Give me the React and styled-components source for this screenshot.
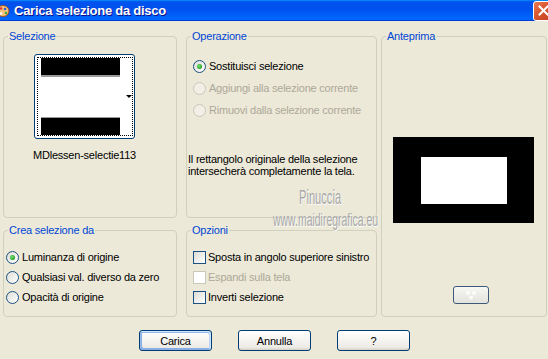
import React from 'react';
import styled, { createGlobalStyle, css } from 'styled-components';

const Global = createGlobalStyle`
  html, body { margin: 0; padding: 0; background: #ECE9D8; }
  body {
    font-family: "Liberation Sans", Tahoma, Arial, sans-serif;
    font-size: 11px;
    letter-spacing: -0.22px;
    color: #000;
  }
`;

const Window = styled.div`
  position: relative;
  width: 548px;
  height: 359px;
  overflow: hidden;
  background: #ECE9D8;
`;

const TitleBar = styled.div`
  height: 21px;
  display: flex;
  align-items: center;
  overflow: hidden;
  background: linear-gradient(180deg, #0997ff, #0053ee 8%, #0050ee 40%, #06f 88%, #06f 93%, #005bff 95%, #003dd7 96%, #003dd7);
`;

const AppIcon = styled.svg`
  flex: none;
  margin-left: -4px;
`;

const Title = styled.span`
  margin-left: 4px;
  flex: 1;
  color: #fff;
  font-weight: bold;
  font-size: 13px;
  letter-spacing: -0.25px;
  text-shadow: 1px 1px #0f1089;
`;

const Close = styled.div`
  flex: none;
  width: 21px;
  height: 20px;
  margin-right: -6px;
  box-sizing: border-box;
  border: 1px solid #fff;
  border-radius: 3px;
  background: linear-gradient(135deg, #e97a55 0%, #d9552f 45%, #c4401d 100%);
  display: flex;
  align-items: center;
  justify-content: center;
`;

const Body = styled.div`
  display: flex;
  padding: 9px 0 0 3px;
`;

const LeftGrid = styled.div`
  display: grid;
  grid-template-columns: 174px 191px;
  grid-template-rows: 188px 93px;
  column-gap: 9px;
  row-gap: 6px;
`;

const Group = styled.fieldset`
  margin: 0;
  padding: 0;
  min-width: 0;
  box-sizing: border-box;
  border: 1px solid #d0d0bf;
  border-radius: 4px;
  ${p => p.$tall && css`
    width: 166px;
    height: 287px;
    margin-left: 4px;
  `}
`;

const Legend = styled.legend`
  padding: 0 1px;
  margin-left: 4px;
  color: #0046d5;
  font-size: 11px;
  line-height: 13px;
`;

const GroupInner = styled.div`
  padding: ${p => p.$pad || '0'};
  display: flex;
  flex-direction: column;
`;

const ThumbColumn = styled.div`
  width: 101px;
  display: flex;
  flex-direction: column;
  align-items: center;
  margin-top: 11px;
`;

const Thumb = styled.div`
  position: relative;
  width: 101px;
  height: 85px;
  box-sizing: border-box;
  border: 1px solid #003c74;
  border-radius: 3px;
  background: #fff;
  padding: 2px 1px 2px 2px;
`;

const FocusRect = styled.div`
  height: 100%;
  box-sizing: border-box;
  border: 1px dotted #000;
  padding: 0 0 0 3px;
  display: flex;
  flex-direction: column;
  justify-content: space-between;
`;

const Bar = styled.div`
  width: 79px;
  height: 17px;
  background: #000;
  ${p => p.$bottom
    ? css`border-top: 1px solid #9a9a9a;`
    : css`border-bottom: 2px solid #9a9a9a;`}
`;

const DropArrow = styled.span`
  position: absolute;
  right: 2px;
  top: 40px;
  width: 0;
  height: 0;
  border-left: 3px solid transparent;
  border-right: 3px solid transparent;
  border-top: 3px solid #000;
`;

const ThumbLabel = styled.div`
  margin-top: 10px;
  white-space: nowrap;
  font-size: 11px;
  line-height: 13px;
`;

const Row = styled.label`
  display: flex;
  align-items: center;
  gap: ${p => p.$gap || 3}px;
  height: ${p => p.$h || 20}px;
  color: ${p => (p.$disabled ? '#aca899' : '#000')};
  white-space: nowrap;
`;

const Radio = styled.span`
  flex: none;
  width: 13px;
  height: 13px;
  box-sizing: border-box;
  border-radius: 50%;
  border: 1px solid ${p => (p.$disabled ? '#cac8bb' : '#1c5180')};
  background: ${p => (p.$disabled ? '#f2f0e6' : 'linear-gradient(135deg, #dcdcd7, #fff)')};
  display: flex;
  align-items: center;
  justify-content: center;
  &::after {
    content: '';
    display: ${p => (p.$checked ? 'block' : 'none')};
    width: 5px;
    height: 5px;
    border-radius: 50%;
    background: radial-gradient(circle at 40% 40%, #7ce07c, #21a121 70%);
  }
`;

const Check = styled.span`
  flex: none;
  width: 13px;
  height: 13px;
  box-sizing: border-box;
  border: 1px solid ${p => (p.$disabled ? '#cac8bb' : '#1c5180')};
  background: ${p => (p.$disabled ? '#fff' : 'linear-gradient(135deg, #dcdcd7, #fff)')};
`;

const Note = styled.div`
  margin: 32px 0 0 -5px;
  line-height: 12px;
`;

const Preview = styled.div`
  width: 141px;
  height: 86px;
  margin: 94px 0 0 11px;
  background: #000;
  display: flex;
  align-items: center;
  justify-content: center;
`;

const PreviewHole = styled.div`
  width: 86px;
  height: 47px;
  background: #fff;
`;

const SmallButton = styled.div`
  width: 36px;
  height: 18px;
  margin: 63px 0 0 71px;
  box-sizing: border-box;
  border: 1px solid #3d5a7a;
  border-radius: 3px;
  background: linear-gradient(180deg, #f7f7f4, #e3e2dc);
  display: flex;
  align-items: center;
  justify-content: center;
`;

const Buttons = styled.div`
  display: flex;
  justify-content: center;
  gap: 26px;
  margin-top: 13px;
  padding-left: 1px;
`;

const Button = styled.button`
  width: 73px;
  height: 21px;
  padding: 0;
  box-sizing: border-box;
  border: 1px solid #003c74;
  border-radius: 3px;
  background: linear-gradient(180deg, #fff, #ecebe6 86%, #d6d0c5);
  font-family: "Liberation Sans", Tahoma, Arial, sans-serif;
  font-size: 11px;
  letter-spacing: -0.2px;
  color: #000;
  ${p => p.$default && css`
    box-shadow: inset -1px 1px #cee7ff, inset 1px 2px #98b8ea, inset -2px 2px #bcd4f6, inset 1px -1px #89ade4, inset 2px -2px #89ade4;
  `}
`;

const Watermark = styled.div`
  position: absolute;
  left: ${p => p.$x}px;
  top: ${p => p.$y}px;
  font-family: "Liberation Sans", Arial, sans-serif;
  font-size: ${p => p.$size}px;
  letter-spacing: 0;
  line-height: 1;
  color: #a8a8a8;
  text-shadow: 1px 1px #fff;
  transform: scaleX(${p => p.$sx});
  transform-origin: left top;
  white-space: nowrap;
  pointer-events: none;
`;

const operations = [
  { label: 'Sostituisci selezione', checked: true },
  { label: 'Aggiungi alla selezione corrente', disabled: true },
  { label: 'Rimuovi dalla selezione corrente', disabled: true },
];

const sources = [
  { label: 'Luminanza di origine', checked: true },
  { label: 'Qualsiasi val. diverso da zero' },
  { label: 'Opacità di origine' },
];

const options = [
  { label: 'Sposta in angolo superiore sinistro' },
  { label: 'Espandi sulla tela', disabled: true },
  { label: 'Inverti selezione' },
];

export default function App() {
  return (
    <Window>
      <Global />
      <TitleBar>
        <AppIcon width="14" height="14" viewBox="0 0 14 14">
          <ellipse cx="7" cy="7" rx="6" ry="5.5" fill="#f4c27a" stroke="#a0521d" strokeWidth="1" />
          <circle cx="5" cy="4.5" r="1.3" fill="#e23b2a" />
          <circle cx="9" cy="5" r="1.3" fill="#2a62d8" />
          <circle cx="10" cy="9" r="1.2" fill="#36a636" />
          <circle cx="5" cy="9.5" r="1.3" fill="#fff" />
        </AppIcon>
        <Title>Carica selezione da disco</Title>
        <Close>
          <svg width="11" height="11" viewBox="0 0 11 11">
            <path d="M1.5 1.5 L9.5 9.5 M9.5 1.5 L1.5 9.5" stroke="#fff" strokeWidth="2" strokeLinecap="square" />
          </svg>
        </Close>
      </TitleBar>

      <Body>
        <LeftGrid>
          <Group>
            <Legend>Selezione</Legend>
            <GroupInner $pad="0 0 0 30px">
              <ThumbColumn>
                <Thumb>
                  <FocusRect>
                    <Bar />
                    <Bar $bottom />
                  </FocusRect>
                  <DropArrow />
                </Thumb>
                <ThumbLabel>MDlessen-selectie113</ThumbLabel>
              </ThumbColumn>
            </GroupInner>
          </Group>

          <Group>
            <Legend>Operazione</Legend>
            <GroupInner $pad="12px 0 0 6px">
              {operations.map(o => (
                <Row key={o.label} $h={22} $disabled={o.disabled}>
                  <Radio $checked={o.checked} $disabled={o.disabled} />
                  {o.label}
                </Row>
              ))}
              <Note>
                Il rettangolo originale della selezione
                <br />
                intersecherà completamente la tela.
              </Note>
            </GroupInner>
          </Group>

          <Group>
            <Legend>Crea selezione da</Legend>
            <GroupInner $pad="10px 0 0 2px">
              {sources.map(o => (
                <Row key={o.label} $gap={3}>
                  <Radio $checked={o.checked} />
                  {o.label}
                </Row>
              ))}
            </GroupInner>
          </Group>

          <Group>
            <Legend>Opzioni</Legend>
            <GroupInner $pad="10px 0 0 6px">
              {options.map(o => (
                <Row key={o.label} $gap={2} $disabled={o.disabled}>
                  <Check $disabled={o.disabled} />
                  {o.label}
                </Row>
              ))}
            </GroupInner>
          </Group>
        </LeftGrid>

        <Group $tall>
          <Legend>Anteprima</Legend>
          <Preview>
            <PreviewHole />
          </Preview>
          <SmallButton>
            <svg width="20" height="12" viewBox="0 0 20 12" opacity="0.8">
              <circle cx="7" cy="4" r="2" fill="#fff" />
              <circle cx="13" cy="4" r="2" fill="#fff" />
              <circle cx="10" cy="8.5" r="2" fill="#fff" />
            </svg>
          </SmallButton>
        </Group>
      </Body>

      <Buttons>
        <Button $default>Carica</Button>
        <Button>Annulla</Button>
        <Button>?</Button>
      </Buttons>

      <Watermark $x={299} $y={186} $size={21} $sx={0.53}>Pinuccia</Watermark>
      <Watermark $x={273} $y={210} $size={19} $sx={0.55}>www.maidiregrafica.eu</Watermark>
    </Window>
  );
}
